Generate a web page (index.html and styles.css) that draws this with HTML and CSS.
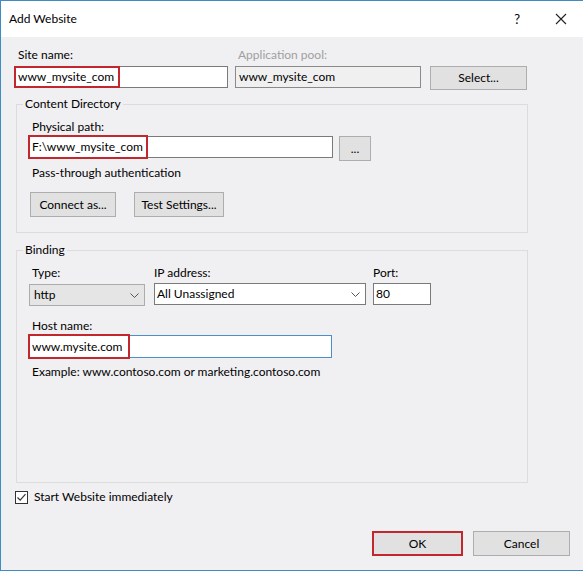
FILE: index.html
```html
<!DOCTYPE html>
<html>
<head>
<meta charset="utf-8">
<link rel="stylesheet" href="styles.css">
</head>
<body>
<div class="window">
  <div class="titlebar">
    <span class="title">Add Website</span>
    <span class="help">?</span>
    <svg class="close" width="12" height="12" viewBox="0 0 12 12"><path d="M1 1L11 11M11 1L1 11" stroke="#222" stroke-width="1.1" fill="none"/></svg>
  </div>
  <div class="main">
    <div class="row1">
      <div class="col site">
        <div class="label lbl-site">Site name:</div>
        <div class="field w-site"><span class="ftext">www_mysite_com</span><span class="hl hl-site"></span></div>
      </div>
      <div class="col pool">
        <div class="label lbl-pool disabled">Application pool:</div>
        <div class="field field-ro w-pool"><span class="ftext">www_mysite_com</span></div>
      </div>
      <div class="col sel">
        <div class="label">&nbsp;</div>
        <div class="btn w-select">Select...</div>
      </div>
    </div>

    <fieldset class="group group-content">
      <legend>Content Directory</legend>
      <div class="label lbl-indent mt-path">Physical path:</div>
      <div class="path-row">
        <div class="field w-path"><span class="ftext">F:\www_mysite_com</span><span class="hl hl-path"></span></div>
        <div class="btn w-dots">...</div>
      </div>
      <div class="label lbl-indent mt-pass">Pass-through authentication</div>
      <div class="btn-row">
        <div class="btn w-connect">Connect as...</div>
        <div class="btn w-test">Test Settings...</div>
      </div>
    </fieldset>

    <fieldset class="group group-binding">
      <legend>Binding</legend>
      <div class="bind-row">
        <div class="bcol c-type">
          <div class="label lbl-type">Type:</div>
          <div class="select select-gray"><span class="ftext">http</span>
            <svg class="chev" width="9" height="5" viewBox="0 0 9 5"><path d="M0.5 0.5L4.5 4.5L8.5 0.5" stroke="#555" stroke-width="1" fill="none"/></svg>
          </div>
        </div>
        <div class="bcol c-ip">
          <div class="label">IP address:</div>
          <div class="select select-white"><span class="ftext">All Unassigned</span>
            <svg class="chev" width="9" height="5" viewBox="0 0 9 5"><path d="M0.5 0.5L4.5 4.5L8.5 0.5" stroke="#555" stroke-width="1" fill="none"/></svg>
          </div>
        </div>
        <div class="bcol c-port">
          <div class="label">Port:</div>
          <div class="field w-port"><span class="ftext port-text">80</span></div>
        </div>
      </div>
      <div class="label lbl-indent mt-host">Host name:</div>
      <div class="field field-focus w-host"><span class="ftext">www.mysite.com</span><span class="hl hl-host"></span></div>
      <div class="label lbl-indent mt-example">Example: www.contoso.com or marketing.contoso.com</div>
    </fieldset>

    <div class="check-row">
      <span class="checkbox">
        <svg width="11" height="11" viewBox="0 0 11 11"><path d="M1.5 5.5L4.2 8.2L9.5 2.2" stroke="#333" stroke-width="1.2" fill="none"/></svg>
      </span>
      <span class="check-label">Start Website immediately</span>
    </div>

    <div class="footer">
      <div class="btn btn-ok w-ok">OK</div>
      <div class="btn w-cancel">Cancel</div>
    </div>
  </div>
</div>
</body>
</html>
```
FILE: styles.css
```css
* { box-sizing: border-box; }
html, body { margin: 0; padding: 0; background: #ffffff; }
body {
  font-family: Lato, "Noto Sans", "Liberation Sans", sans-serif;
  font-size: 12px;
  color: #000;
  width: 583px;
  height: 574px;
  overflow: hidden;
}
.window {
  width: 583px;
  height: 571px;
  border-top: 1px solid #3f8cc4;
  border-left: 1px solid #3f8cc4;
  border-bottom: 1px solid #3f8cc4;
  display: flex;
  flex-direction: column;
  background: #f0eff2;
}
.titlebar {
  height: 36px;
  background: #ffffff;
  display: flex;
  align-items: center;
  padding-left: 8px;
  flex: none;
}
.title { font-size: 12px; line-height: 16px; }
.help { margin-left: auto; margin-right: 35px; font-size: 13px; }
.close { margin-right: 16px; }
.main {
  flex: 1;
  padding: 10px 0 0 13px;
  display: flex;
  flex-direction: column;
}
.label { line-height: 16px; height: 16px; white-space: nowrap; }
.disabled { color: #a0a0a0; }
.row1 { display: flex; align-items: flex-start; }
.col { display: flex; flex-direction: column; }
.lbl-site { padding-left: 4px; }
.lbl-pool { padding-left: 3px; }
.row1 .field, .row1 .btn { margin-top: 3px; }
.site { margin-right: 7px; }
.pool { margin-right: 9px; }

.field {
  position: relative;
  height: 22px;
  border: 1px solid #7a7a7a;
  background: #ffffff;
  display: flex;
  align-items: center;
  padding-left: 3px;
  white-space: nowrap;
}
.field-ro { background: #f0f0f0; border-color: #8a8a8a; }
.field-focus { border-color: #4f8fc9; }
.ftext { line-height: 16px; }
.hl {
  position: absolute;
  left: -1px;
  top: -1px;
  bottom: -1px;
  border: 2px solid #c2272d;
}
.hl-site { width: 106px; }
.hl-path { width: 120px; top: -2px; bottom: -2px; }
.hl-host { width: 102px; top: -2px; bottom: -2px; }

.w-site { width: 214px; }
.w-pool { width: 186px; }
.w-select { width: 97px; height: 24px; }
.w-path { width: 305px; }
.w-dots { width: 32px; height: 25px; margin-left: 6px; }
.w-connect { width: 86px; height: 25px; }
.w-test { width: 90px; height: 25px; margin-left: 18px; }
.w-port { width: 58px; }
.w-host { width: 304px; height: 23px; }
.w-ok { width: 91px; height: 25px; }
.w-cancel { width: 97px; height: 25px; margin-left: 10px; }

.btn {
  background: #e1e1e1;
  border: 1px solid #adadad;
  display: flex;
  align-items: center;
  justify-content: center;
  white-space: nowrap;
  line-height: 16px;
}
.btn-ok { border: 2px solid #c2272d; }

.group {
  margin: 0;
  padding: 0 0 0 11px;
  border: 1px solid #dcdcdc;
  min-width: 0;
  width: 512px;
  margin-left: 2px;
}
.group legend {
  padding: 0 2px;
  margin-left: -5px;
  line-height: 16px;
}
.group-content { margin-top: 6px; padding-bottom: 15px; }
.lbl-indent { padding-left: 4px; }
.mt-path { margin-top: 7px; }
.path-row { display: flex; align-items: flex-start; margin-top: 1px; }
.mt-pass { margin-top: 4px; }
.btn-row { display: flex; margin-top: 11px; margin-left: 2px; }

.group-binding { margin-top: 9px; padding-bottom: 102px; }
.bind-row { display: flex; margin-top: 7px; margin-left: 1px; }
.bcol { display: flex; flex-direction: column; }
.c-type { width: 116px; margin-right: 9px; }
.c-ip { width: 212px; margin-right: 7px; }
.c-port { width: 58px; }
.lbl-type { padding-left: 3px; }
.bcol .field, .bcol .select { margin-top: 2px; }
.c-type .select { margin-top: 3px; }
.select {
  height: 22px;
  display: flex;
  align-items: center;
  padding-left: 4px;
  padding-right: 5px;
  justify-content: space-between;
}
.select-gray { background: #e5e5e5; border: 1px solid #acacac; }
.select-white { background: #ffffff; border: 1px solid #7a7a7a; padding-left: 2px; }
.chev { flex: none; }
.port-text { margin-left: -1px; }
.mt-host { margin-top: 12px; }
.w-host { margin-top: 1px; }
.mt-example { margin-top: 6px; }

.check-row {
  display: flex;
  align-items: center;
  margin-top: 6px;
  margin-left: 1px;
  height: 16px;
}
.checkbox {
  width: 13px;
  height: 13px;
  border: 1px solid #333;
  background: #fff;
  display: flex;
  align-items: center;
  justify-content: center;
}
.check-label { margin-left: 6px; line-height: 16px; }
.footer {
  display: flex;
  justify-content: flex-end;
  margin-top: 26px;
  margin-right: 13px;
}
```
